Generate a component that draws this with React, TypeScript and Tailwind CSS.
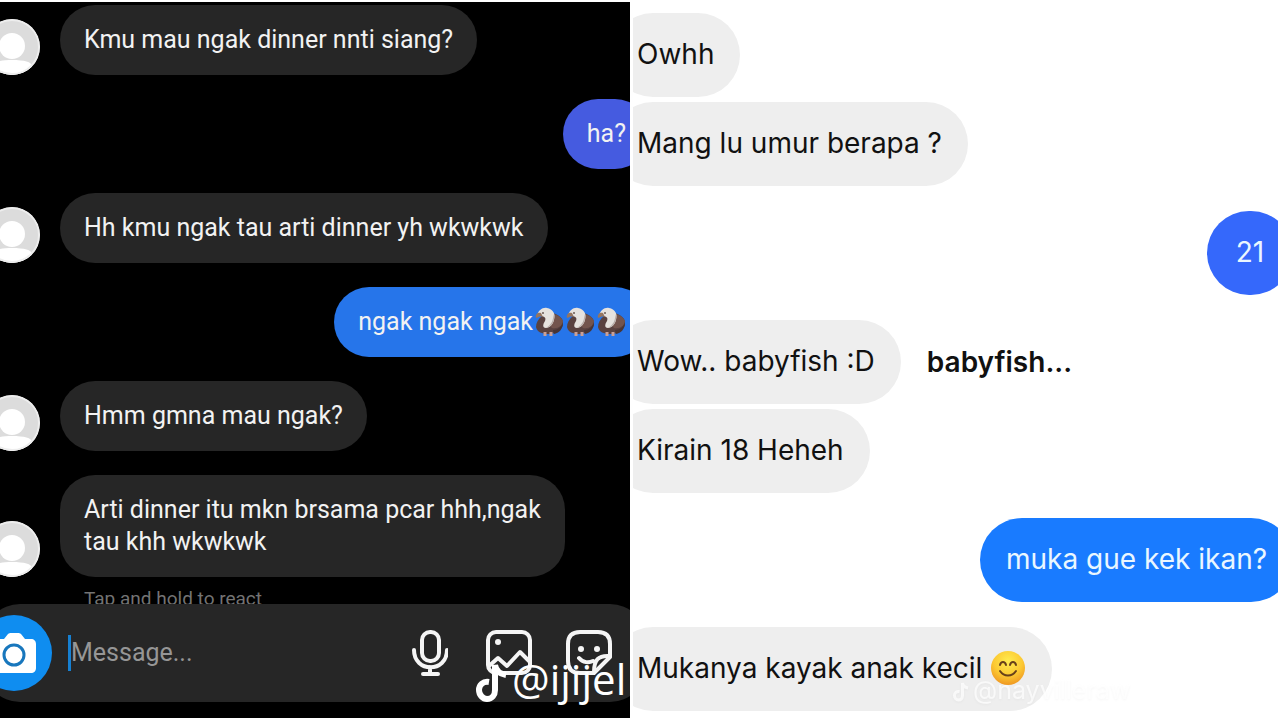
import type { ReactNode } from "react";

type Message = {
  from: "me" | "them";
  text: ReactNode;
  className: string;
  note?: string;
};

const Eagle = () => (
  <svg viewBox="0 0 31 32" className="inline-block h-8 w-[31px] align-top">
    <path d="M9 10c-4 3-6 7-6 11 1 5 6 7 12 7 9 0 15-5 15-11 0-5-4-8-10-10z" fill="#5a4240" />
    <path d="M18 8c6 0 10 3 12 7-1 5-5 8-11 7-4-4-4-9-1-14z" fill="#73544d" />
    <path d="M20 24c5 0 8-3 10-7 0 6-4 10-9 11z" fill="#493534" />
    <path d="M12 26v4M18 26v4" stroke="#caa096" strokeWidth="3" />
    <path d="M4 10C5 4 10 1 14 2c6 1 9 6 7 12-1 4-4 8-8 8-4 0-3-4-1-7 1-3 0-4-3-5z" fill="#e6e2de" />
    <path d="M20 8c1 6-2 11-7 14 6-1 10-8 7-14z" fill="#b9aeaa" />
    <path d="M3 12c-1-4 2-6 5-5l2 4c-3-1-4 0-7 1z" fill="#96755f" />
    <circle cx="10" cy="7" r="1" fill="#6b5a54" />
  </svg>
);

const Smile = () => (
  <svg viewBox="0 0 36 36" className="inline-block h-9 w-9 align-top">
    <defs>
      <radialGradient id="face" cx="50%" cy="30%" r="70%">
        <stop offset="0" stopColor="#ffec50" />
        <stop offset="0.6" stopColor="#fcc933" />
        <stop offset="1" stopColor="#ef9822" />
      </radialGradient>
    </defs>
    <circle cx="18" cy="18" r="17" fill="url(#face)" />
    <g fill="none" stroke="#68401a" strokeWidth="2" strokeLinecap="round">
      <path d="M10 15c1-4 5-4 6 0M20 15c1-4 5-4 6 0" />
      <path d="M10 21c4 6 12 6 16 0" />
    </g>
  </svg>
);

const TikTok = ({ className }: { className: string }) => (
  <svg viewBox="0 0 32 38" className={className} fill="none" stroke="currentColor" strokeWidth="6">
    <path d="M13 18C7 17 3 21 3 26s4 9 8 9c5 0 8-4 8-9V1c1 6 5 9 11 10" />
  </svg>
);

const Avatar = () => (
  <svg viewBox="0 0 56 56" className="-ml-4 h-14 w-14 shrink-0">
    <clipPath id="round">
      <circle cx="28" cy="28" r="28" />
    </clipPath>
    <g clipPath="url(#round)">
      <rect width="56" height="56" fill="#dcdcdc" />
      <circle cx="28" cy="27" r="13" fill="#fff" />
      <path d="M8 56V47c0-4 8-6 20-6s20 2 20 6v9z" fill="#fff" />
      <circle cx="28" cy="28" r="27" fill="none" stroke="#ededed" strokeWidth="2" />
    </g>
  </svg>
);

const darkMessages: Message[] = [
  { from: "them", text: "Kmu mau ngak dinner nnti siang?", className: "bg-[#262626]" },
  { from: "me", text: "ha?", className: "bg-[#455be0]" },
  { from: "them", text: "Hh kmu ngak tau arti dinner yh wkwkwk", className: "bg-[#262626]" },
  {
    from: "me",
    text: (
      <>
        ngak ngak ngak
        <Eagle />
        <Eagle />
        <Eagle />
      </>
    ),
    className: "bg-[#2675ea]",
  },
  { from: "them", text: "Hmm gmna mau ngak?", className: "bg-[#262626]" },
  {
    from: "them",
    text: (
      <>
        Arti dinner itu mkn brsama pcar hhh,ngak
        <br />
        tau khh wkwkwk
      </>
    ),
    className: "bg-[#262626]",
  },
];

const lightMessages: Message[] = [
  { from: "them", text: "Owhh", className: "" },
  { from: "them", text: "Mang lu umur berapa ?", className: "mt-[5px]" },
  { from: "me", text: "21", className: "mt-[25px] bg-[#3568fb]" },
  { from: "them", text: "Wow.. babyfish :D", className: "mt-[25px]", note: "babyfish..." },
  { from: "them", text: "Kirain 18 Heheh", className: "mt-[5px]" },
  { from: "me", text: "muka gue kek ikan?", className: "mt-[25px] bg-[#197bff]" },
  {
    from: "them",
    text: (
      <>
        Mukanya kayak anak kecil <Smile />
      </>
    ),
    className: "mt-[25px]",
  },
];

function Composer() {
  return (
    <form
      className="relative -mx-4 -mt-2 flex h-[98px] items-center rounded-[36px] bg-[#262626]"
      onSubmit={(e) => e.preventDefault()}
    >
      <button
        type="button"
        aria-label="Camera"
        className="-ml-2 grid h-[76px] w-[76px] shrink-0 place-items-center rounded-full bg-[#0f8df0]"
      >
        <svg viewBox="0 0 46 42" className="h-[42px] w-[46px]">
          <path d="M6 7h7l4-5c1-1 2-1 3-1h7c1 0 2 0 3 1l4 5h6c3 0 5 2 5 5v24c0 3-2 5-5 5H6c-3 0-5-2-5-5V12c0-3 2-5 5-5z" fill="#fff" />
          <circle cx="23" cy="23" r="10" fill="none" stroke="#1877bd" strokeWidth="3" />
        </svg>
      </button>
      <span className="ml-4 h-9 w-[3px] bg-[#1680d2]" />
      <input
        aria-label="Message"
        placeholder="Message..."
        className="min-w-0 flex-1 text-[25px] leading-8 text-white outline-none placeholder:text-[#969696]"
      />
      <div className="mr-[34px] flex shrink-0 items-center text-[#f5f5f5]">
        <button type="button" aria-label="Voice" className="mr-[38px]">
          <svg viewBox="0 0 36 46" className="h-[46px] w-9" fill="none" stroke="currentColor" strokeWidth="4" strokeLinecap="round">
            <rect x="10" y="2" width="17" height="29" rx="8" />
            <path d="M2 20c0 23 33 23 33 0M18 37v7M11 44h15" />
          </svg>
        </button>
        <button type="button" aria-label="Gallery" className="mr-[34px]">
          <svg viewBox="0 0 46 46" className="h-[46px] w-[46px]" fill="none" stroke="currentColor" strokeWidth="4" strokeLinejoin="round">
            <rect x="2" y="2" width="42" height="41" rx="8" />
            <circle cx="12" cy="12" r="3" fill="currentColor" stroke="none" />
            <path d="M3 36l9-8 9 8 13-14 10 10" />
          </svg>
        </button>
        <button type="button" aria-label="Stickers">
          <svg viewBox="0 0 46 46" className="h-[46px] w-[46px]" fill="none" stroke="currentColor" strokeWidth="4" strokeLinecap="round" strokeLinejoin="round">
            <path d="M14 2h18c8 0 12 4 12 12v13L28 43H14C6 43 2 39 2 31V14C2 6 6 2 14 2z" />
            <path d="M44 26c-12-1-16 4-16 16M13 28c4 5 10 5 14 3" />
            <circle cx="15" cy="19" r="3" fill="currentColor" stroke="none" />
            <circle cx="31" cy="19" r="3" fill="currentColor" stroke="none" />
          </svg>
        </button>
      </div>
    </form>
  );
}

export default function App() {
  return (
    <main className="flex min-h-screen gap-[3px] overflow-hidden bg-white py-[2px] pr-[2px]">
      <section className="relative flex shrink grow basis-[630px] flex-col overflow-hidden bg-black pt-[3px] font-[Roboto,sans-serif] text-[25px] leading-8 text-[#f2f2f2]">
        <div className="flex flex-col gap-6">
          {darkMessages.map((m, i) => (
            <div key={i} className={m.from === "me" ? "-mr-5 flex justify-end" : "flex items-end gap-5"}>
              {m.from === "them" && <Avatar />}
              <p className={`whitespace-nowrap rounded-[35px] px-6 py-[19px] ${m.className}`}>{m.text}</p>
            </div>
          ))}
        </div>
        <p className="ml-[84px] mt-[10px] pb-px text-[19px] leading-6 text-[#737373]">Tap and hold to react</p>
        <Composer />
        <div className="absolute bottom-4 left-[476px] flex items-end text-white">
          <TikTok className="h-[38px] w-8" />
          <span className="ml-1 whitespace-nowrap font-['Open_Sans',sans-serif] text-[42px] leading-[46px]">@ijijel</span>
        </div>
      </section>
      <section className="relative shrink grow basis-[645px] overflow-hidden pt-[11px] font-[Inter,sans-serif] text-[28px] leading-9 text-[#111]">
        {lightMessages.map((m, i) => (
          <div
            key={i}
            className={m.from === "me" ? "-mr-[15px] flex justify-end" : "-ml-[22px] flex items-center gap-[26px]"}
          >
            <p
              className={`min-w-[86px] whitespace-nowrap rounded-[42px] px-[26px] pb-[25px] pt-[23px] text-center ${m.from === "me" ? "text-[#eaf7ff]" : "bg-[#eee]"} ${m.className}`}
            >
              {m.text}
            </p>
            {m.note && <strong className="mt-6 font-semibold">{m.note}</strong>}
          </div>
        ))}
        <div className="absolute bottom-4 left-[320px] flex items-end text-white/70 drop-shadow-xs">
          <TikTok className="h-5 w-4" />
          <span className="ml-1 text-[25px] leading-6">@nayvilleraw</span>
        </div>
      </section>
    </main>
  );
}
